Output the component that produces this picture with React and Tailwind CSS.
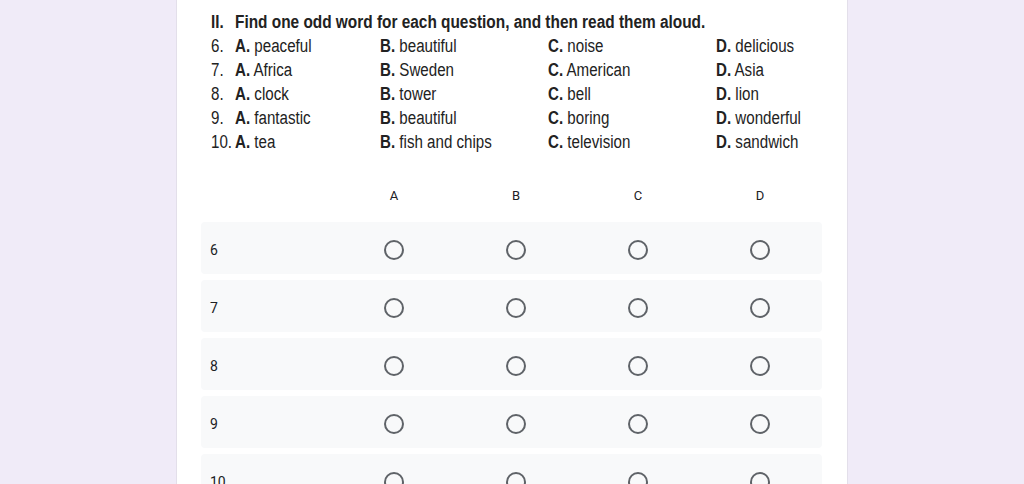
const QUESTIONS = [
  { n: '6.', a: 'peaceful', b: 'beautiful', c: 'noise', d: 'delicious' },
  { n: '7.', a: 'Africa', b: 'Sweden', c: 'American', d: 'Asia' },
  { n: '8.', a: 'clock', b: 'tower', c: 'bell', d: 'lion' },
  { n: '9.', a: 'fantastic', b: 'beautiful', c: 'boring', d: 'wonderful' },
  { n: '10.', a: 'tea', b: 'fish and chips', c: 'television', d: 'sandwich' },
];

const ROWS = ['6', '7', '8', '9', '10'];
const COLS = ['A', 'B', 'C', 'D'];

// the question is a scanned worksheet set in a narrow face; squeeze Liberation Sans to match
function Narrow({ children, className = 'scale-x-[0.84]' }) {
  return (
    <span className={`inline-block whitespace-nowrap origin-left ${className}`}>
      {children}
    </span>
  );
}

function Option({ letter, word }) {
  return (
    <Narrow>
      <b className="font-bold">{letter}.</b> {word}
    </Narrow>
  );
}

function Radio() {
  return <div className="w-5 h-5 rounded-full border-2 border-[#5f6368]" />;
}

export default function App() {
  return (
    <div className="w-[1024px] h-[484px] overflow-hidden bg-[#f0ebf8] flex justify-center">
      <div className="w-[672px] bg-white border-x border-[#e3dfea] flex flex-col pl-[24px] pr-[25px] pt-[10px]">

        {/* question image */}
        <div className="grid grid-cols-[24px_145px_168px_168px_1fr] text-[18px] leading-[24px] text-[#222] pl-[10px] font-['Liberation_Sans',sans-serif]">
          <Narrow className="font-bold scale-x-[0.84]">II.</Narrow>
          <div className="col-span-4">
            <Narrow className="font-bold scale-x-[0.855]">
              Find one odd word for each question, and then read them aloud.
            </Narrow>
          </div>
          {QUESTIONS.map(q => (
            <div key={q.n} className="contents">
              <div><Narrow>{q.n}</Narrow></div>
              <div><Option letter="A" word={q.a} /></div>
              <div><Option letter="B" word={q.b} /></div>
              <div><Option letter="C" word={q.c} /></div>
              <div><Option letter="D" word={q.d} /></div>
            </div>
          ))}
        </div>

        {/* grid */}
        <div className="mt-[24px] font-['Roboto',sans-serif] text-[14px] text-[#202124]">
          <div className="grid grid-cols-[132px_repeat(4,122px)] h-[36px] items-center">
            <span />
            {COLS.map(c => (
              <span key={c} className="text-center text-[13px]">{c}</span>
            ))}
          </div>
          <div className="flex flex-col gap-[6px] mt-[8px]">
            {ROWS.map(r => (
              <div
                key={r}
                className="grid grid-cols-[132px_repeat(4,122px)] h-[52px] pt-1 items-center bg-[#f8f9fa] rounded"
              >
                <span className="pl-[9px]">{r}</span>
                {COLS.map(c => (
                  <div key={c} className="flex justify-center">
                    <Radio />
                  </div>
                ))}
              </div>
            ))}
          </div>
        </div>
      </div>
    </div>
  );
}
